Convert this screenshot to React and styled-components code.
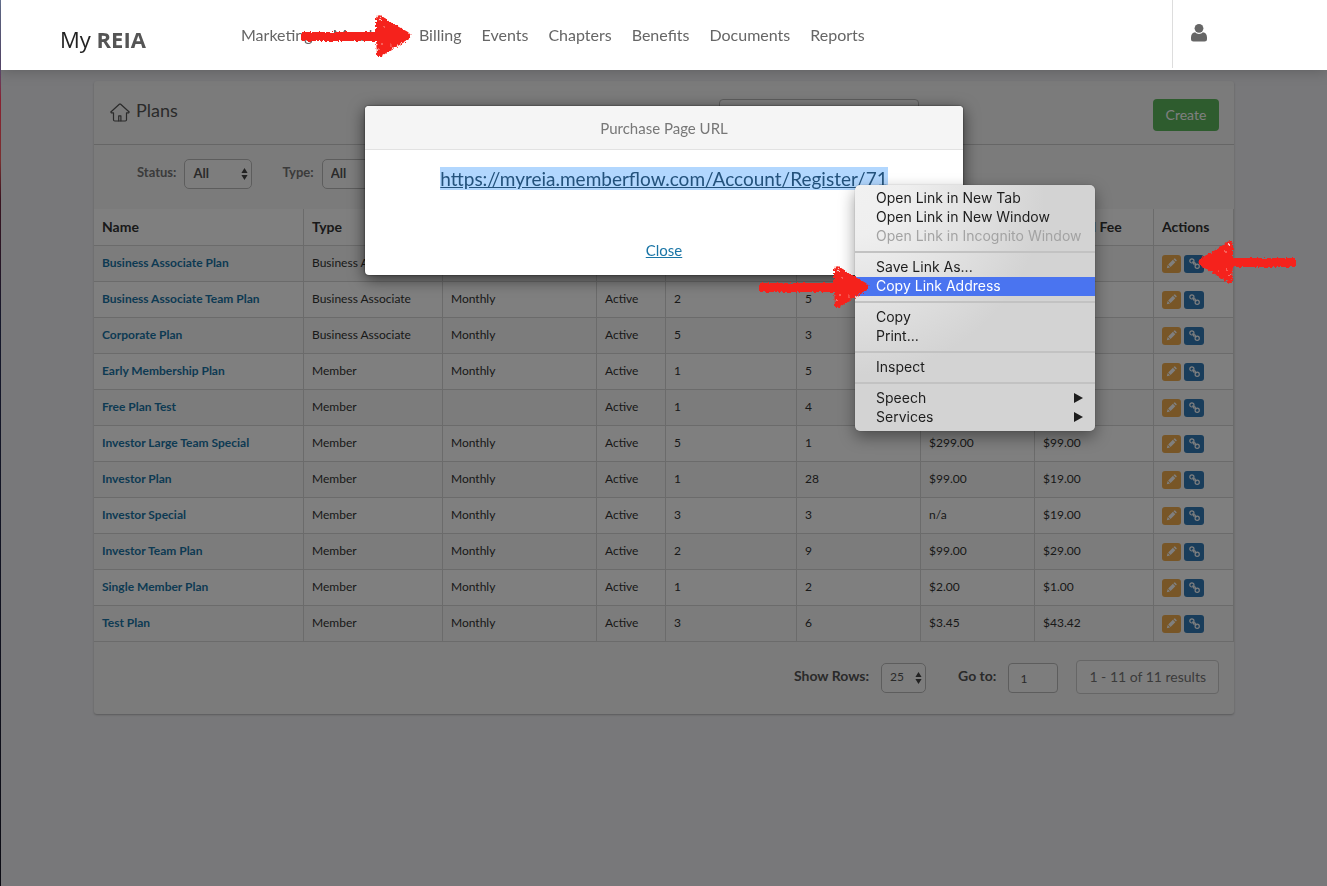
import React from "react";
import styled, { createGlobalStyle } from "styled-components";

const GlobalStyle = createGlobalStyle`
  * { box-sizing: border-box; }
  body {
    margin: 0;
    background: #f0f0f4;
    font-family: Lato, "Open Sans", sans-serif;
    color: #333;
  }
  #root { min-height: 100vh; display: flex; }
`;

const Page = styled.div`
  flex: 1;
  min-width: 0;
  min-height: 100vh;
  border-left: 1px solid;
  border-image: linear-gradient(#6a7898 0, #5a4a70 70px, #8a2030 100px, #7a3030 160px, #3a1420 200px, #15182c 320px, #0c0c14 100%) 1;
`;

const Header = styled.header`
  position: relative;
  z-index: 3;
  height: 70px;
  display: flex;
  align-items: center;
  padding-left: 59px;
  background: #fff;
  box-shadow: 0 0 14px rgba(0, 0, 0, 0.25);
`;

const Logo = styled.a`
  width: 181px;
  padding-top: 8px;
  font: 400 22px/32px "Open Sans", sans-serif;
  color: #222;
  text-decoration: none;
  white-space: nowrap;
  b { color: #555; }
`;

const Nav = styled.nav`
  position: relative;
  display: flex;
  gap: 20px;
  flex: 1;
`;

const NavLink = styled.a`
  font-size: 16px;
  line-height: 20px;
  color: #666;
  text-decoration: none;
`;

const UserArea = styled.div`
  align-self: flex-start;
  width: 155px;
  height: 68px;
  border-left: 1px solid #ddd;
  padding: 18px 0 0 13px;
`;

const IconButton = styled.button`
  display: grid;
  place-items: center;
  width: 26px;
  height: 30px;
  padding: 0;
  border: 0;
  background: none;
  color: #666;
`;

const Panel = styled.main`
  max-width: 1140px;
  margin: 11px auto 0;
  background: #f7f7f7;
  border-radius: 3px;
  box-shadow: 0 1px 2px rgba(0, 0, 0, 0.25);
`;

const PanelHead = styled.div`
  display: flex;
  height: 64px;
  padding: 18px 15px 0 16px;
  border-bottom: 1px solid #ccc;
`;

const Title = styled.h1`
  display: flex;
  gap: 6px;
  flex: 1;
  margin: 0;
  font-size: 18px;
  line-height: 22px;
  font-weight: 400;
  color: #555;
  svg { margin-top: 4px; }
`;

const Field = styled.input`
  width: ${(p) => p.$width}px;
  height: ${(p) => p.$height || 30}px;
  padding: 0 11px;
  border: 1px solid #bbb;
  border-radius: 4px;
  background: #fbfbfb;
  font: 400 12px/18px Lato, sans-serif;
  color: #555;
`;

const HeadActions = styled.div`
  display: flex;
  gap: 234px;
`;

const CreateButton = styled.button`
  width: 66px;
  height: 32px;
  padding: 0;
  border: 0;
  border-radius: 4px;
  background: #5cb85c;
  color: #fff;
  font: 400 14px/20px Lato, sans-serif;
`;

const Filters = styled.div`
  display: flex;
  gap: 30px;
  height: 64px;
  padding: 14px 0 0 43px;
`;

const Labelled = styled.div`
  display: flex;
  gap: ${(p) => p.$gap || 8}px;
`;

const Label = styled.label`
  padding-top: 3px;
  font-size: ${(p) => (p.$strong ? 14 : 13)}px;
  line-height: 20px;
  font-weight: 700;
  color: ${(p) => (p.$strong ? "#555" : "#777")};
`;

const SelectWrap = styled.span`
  position: relative;
  display: block;
  width: ${(p) => p.$width}px;
  height: 30px;
  svg { position: absolute; right: 4px; top: 9px; pointer-events: none; }
`;

const Select = styled.select`
  appearance: none;
  width: 100%;
  height: 30px;
  padding: 0 8px 2px;
  border: 1px solid #bbb;
  border-radius: 5px;
  background: #fbfbfb;
  font: 400 12px/18px Lato, sans-serif;
  ${(p) => p.$bold && "font-size: 13px; font-weight: 700;"}
  color: #555;
`;

const Table = styled.table`
  width: 100%;
  table-layout: fixed;
  border-collapse: separate;
  border-spacing: 0;
`;

const Th = styled.th`
  height: 37px;
  padding: 0 8px;
  border-right: 1px solid #d6d6d6;
  border-bottom: 1px solid #d6d6d6;
  background: #fff;
  text-align: left;
  white-space: nowrap;
  font-size: 14px;
  line-height: 20px;
  font-weight: 700;
  color: #333;
`;

const Row = styled.tr`
  background: ${(p) => (p.$striped ? "#f9f9f9" : "#fff")};
`;

const Td = styled.td`
  height: 36px;
  padding: 0 8px 2px;
  border-right: 1px solid #d6d6d6;
  border-bottom: 1px solid #d6d6d6;
  font-size: 12px;
  line-height: 18px;
  color: #333;
`;

const PlanLink = styled.a`
  font-weight: 700;
  color: #1a75a6;
  text-decoration: none;
`;

const Actions = styled.div`
  display: flex;
  gap: 3px;
  padding-top: 2px;
`;

const ActionButton = styled.button`
  display: grid;
  place-items: center;
  width: ${(p) => (p.$kind === "edit" ? 19 : 20)}px;
  height: 18px;
  padding: 0;
  border: 0;
  border-radius: 3px;
  color: #fff;
  background: ${(p) => (p.$kind === "edit" ? "#f0ad4e" : "#337ab7")};
`;

const PanelFoot = styled.div`
  display: flex;
  justify-content: flex-end;
  height: 72px;
  padding: 21px 15px 0 0;
`;

const PageControls = styled.div`
  display: flex;
  gap: 32px;
  margin-right: 18px;
`;

const Results = styled.output`
  height: 34px;
  margin-top: -3px;
  padding: 6px 12px;
  border: 1px solid #ccc;
  border-radius: 4px;
  background: #fbfbfb;
  font-size: 14px;
  line-height: 20px;
  color: #777;
`;

const Overlay = styled.div`
  position: fixed;
  inset: 70px 0 0 1px;
  z-index: 2;
  background: rgba(0, 0, 0, 0.5);
`;

const OverTop = styled.div`
  position: absolute;
  inset: 70px 0 auto 1px;
  z-index: 4;
`;

const Stage = styled.div`
  position: relative;
  max-width: 1140px;
  margin: 0 auto;
  padding-top: 36px;
`;

const Dialog = styled.section`
  position: relative;
  max-width: 598px;
  height: 169px;
  margin: 0 auto;
  border-radius: 4px;
  background: #fff;
  box-shadow: 0 4px 16px rgba(0, 0, 0, 0.6), 0 0 2px rgba(0, 0, 0, 0.7);
  text-align: center;
`;

const DialogTitle = styled.h2`
  height: 44px;
  margin: 0;
  padding-top: 12px;
  border-bottom: 1px solid #e2e2e2;
  border-radius: 4px 4px 0 0;
  background: #f5f5f5;
  font-size: 15px;
  line-height: 20px;
  font-weight: 400;
  color: #777;
`;

const DialogBody = styled.div`
  display: flex;
  flex-direction: column;
  align-items: center;
  gap: 50px;
  padding-top: 17px;
`;

const UrlLink = styled.a`
  background: #b2d7fe;
  font-size: 19px;
  line-height: 23px;
  color: #23527c;
`;

const CloseButton = styled.button`
  padding: 0;
  border: 0;
  background: none;
  font: 400 15px/20px Lato, sans-serif;
  color: #1a75a6;
  text-decoration: underline;
`;

const Menu = styled.div`
  position: absolute;
  left: 490px;
  top: 79px;
  width: 240px;
  padding: 4px 0;
  border-radius: 5px;
  background: radial-gradient(circle at 0 0, #f1f1f1 0, #efefef 50px, #d3d3d3 190px);
  box-shadow: 0 6px 16px rgba(0, 0, 0, 0.4), 0 0 1px rgba(0, 0, 0, 0.5);
`;

const MenuItem = styled.button`
  display: flex;
  align-items: center;
  justify-content: space-between;
  width: 100%;
  height: 19px;
  padding: 0 12px 2px 21px;
  border: 0;
  background: ${(p) => (p.$active ? "#4a74f0" : "none")};
  color: ${(p) => (p.$active ? "#fff" : p.disabled ? "#a3a3a3" : "#1d1d1d")};
  font: 400 14px/17px Inter, "Liberation Sans", sans-serif;
  text-align: left;
  white-space: nowrap;
`;

const MenuRule = styled.hr`
  height: 2px;
  margin: 5px 0;
  border: 0;
  background: #c2c2c2;
`;

const Mark = styled.svg`
  position: absolute;
  left: ${(p) => p.$x}px;
  top: ${(p) => p.$y}px;
  overflow: visible;
  pointer-events: none;
`;

function ChalkArrow({ id, x, y, left, length = 110 }) {
  const s = length - 110;
  return (
    <Mark $x={x} $y={y} width={length} height="44" viewBox={`0 0 ${length} 44`} aria-hidden="true">
      <defs>
        <filter id={id} x="-5%" y="-10%" width="110%" height="120%">
          <feTurbulence type="fractalNoise" baseFrequency="0.45" numOctaves="2" seed="4" result="n" />
          <feDisplacementMap in="SourceGraphic" in2="n" scale="4" xChannelSelector="R" yChannelSelector="G" />
        </filter>
      </defs>
      <g filter={`url(#${id})`} transform={left ? `translate(${length} 0) scale(-1 1)` : undefined}>
        <path
          fill="#f5231c"
          d={`M0 18 H${75 + s} L${75 + s} 4 Q${76 + s} 0 ${81 + s} 2 L${89 + s} 8 L${107 + s} 18 Q${112 + s} 22 ${107 + s} 26 L${90 + s} 36 L${79 + s} 43 Q${75 + s} 43 ${76 + s} 39 L${75 + s} 27 H0 Z`}
        />
        <g fill="#fff" opacity="0.75" transform={`translate(${s} 0)`}>
          <circle cx="79" cy="5" r="1.2" />
          <circle cx="83" cy="12" r="0.7" />
          <circle cx="78" cy="35" r="0.8" />
          <circle cx="81" cy="30" r="0.7" />
          <circle cx="90" cy="31" r="0.6" />
        </g>
      </g>
    </Mark>
  );
}

const UserIcon = () => (
  <svg width="18" height="20" viewBox="0 0 18 20" fill="currentColor" aria-hidden="true">
    <path d="M1 14.5c0-3 1.5-5 4.2-5.2C7 11.4 11 11.4 12.8 9.3 15.5 9.5 17 11.5 17 14.5v1.5q0 2.500-2.500 2.500h-11Q1 18.500 1 16z" />
    <circle cx="9" cy="5.300" r="4.400" />
  </svg>
);

const HomeIcon = () => (
  <svg width="20" height="19" viewBox="0 0 20 19" fill="none" stroke="currentColor" strokeWidth="1.200" strokeLinejoin="round" strokeLinecap="round" aria-hidden="true">
    <path d="M3.500 9.800H1.200L.8 9 9.300 1.200h1.400L19.200 9l-.4.800h-2.300v7q0 1.200-1.200 1.200H4.700q-1.200 0-1.200-1.200z" />
    <path d="M8.700 17.800v-5h2.200v5" />
  </svg>
);

const PencilIcon = () => (
  <svg width="11" height="11" viewBox="0 0 11 11" fill="currentColor" aria-hidden="true">
    <path d="M.8 10.300l.9-3.200 2.300 2.300zM2.200 6.500L6.900 1.800l2.400 2.400-4.700 4.700zM7.500 1.200l.6-.6q.5-.4 1 0l1.400 1.400q.4.500 0 1l-.6.600z" />
  </svg>
);

const LinkIcon = () => (
  <svg width="11" height="11" viewBox="0 0 11 11" fill="none" stroke="currentColor" strokeWidth="1.200" aria-hidden="true">
    <circle cx="2.900" cy="2.900" r="2.100" />
    <circle cx="8.200" cy="8.200" r="2.100" />
    <path d="M3.800 3.800l1.300 2.700M5.700 4.500l1.300 2.500" strokeLinecap="round" />
  </svg>
);

const SortIcon = () => (
  <svg width="7" height="12" viewBox="0 0 7 12" fill="#444" aria-hidden="true">
    <path d="M3.500 0L6.600 5H.4zM3.500 12L.4 7h6.200z" />
  </svg>
);

function Dropdown({ id, width, value, bold }) {
  return (
    <SelectWrap $width={width}>
      <Select id={id} $bold={bold} defaultValue={value}>
        <option>{value}</option>
      </Select>
      <SortIcon />
    </SelectWrap>
  );
}

const navItems = ["Marketing", "Members", "Billing", "Events", "Chapters", "Benefits", "Documents", "Reports"];

const columns = [
  ["Name", 210], ["Type", 139], ["", 154], ["", 69], ["", 131],
  ["", 124], ["", 114], ["Renewal Fee", 119], ["Actions", 80],
];

const plans = [
  ["Business Associate Plan", "Business Associate", "", "", "", "", "", ""],
  ["Business Associate Team Plan", "Business Associate", "Monthly", "Active", "2", "5", "", ""],
  ["Corporate Plan", "Business Associate", "Monthly", "Active", "5", "3", "", ""],
  ["Early Membership Plan", "Member", "Monthly", "Active", "1", "5", "", ""],
  ["Free Plan Test", "Member", "", "Active", "1", "4", "", ""],
  ["Investor Large Team Special", "Member", "Monthly", "Active", "5", "1", "$299.00", "$99.00"],
  ["Investor Plan", "Member", "Monthly", "Active", "1", "28", "$99.00", "$19.00"],
  ["Investor Special", "Member", "Monthly", "Active", "3", "3", "n/a", "$19.00"],
  ["Investor Team Plan", "Member", "Monthly", "Active", "2", "9", "$99.00", "$29.00"],
  ["Single Member Plan", "Member", "Monthly", "Active", "1", "2", "$2.00", "$1.00"],
  ["Test Plan", "Member", "Monthly", "Active", "3", "6", "$3.45", "$43.42"],
];

const menuGroups = [
  ["Open Link in New Tab", "Open Link in New Window", "Open Link in Incognito Window"],
  ["Save Link As...", "Copy Link Address"],
  ["Copy", "Print..."],
  ["Inspect"],
  ["Speech", "Services"],
];

function ContextMenu() {
  return (
    <Menu role="menu">
      {menuGroups.map((group, i) => (
        <React.Fragment key={group[0]}>
          {i > 0 && <MenuRule />}
          {group.map((item) => (
            <MenuItem
              key={item}
              role="menuitem"
              $active={item === "Copy Link Address"}
              disabled={item === "Open Link in Incognito Window"}
            >
              {item}
              {i === 4 && (
                <svg width="10" height="10" viewBox="0 0 10 10" aria-hidden="true">
                  <path d="M1 0L10 5 1 10z" fill="#1d1d1d" />
                </svg>
              )}
            </MenuItem>
          ))}
        </React.Fragment>
      ))}
    </Menu>
  );
}

export default function App() {
  return (
    <Page>
      <GlobalStyle />
      <Header>
        <Logo href="#">My <b>REIA</b></Logo>
        <Nav>
          {navItems.map((item) => <NavLink key={item} href="#">{item}</NavLink>)}
          <ChalkArrow id="chalk-nav" x={60} y={-11} />
        </Nav>
        <UserArea>
          <IconButton aria-label="Account"><UserIcon /></IconButton>
        </UserArea>
      </Header>

      <Panel>
        <PanelHead>
          <Title><HomeIcon />Plans</Title>
          <HeadActions>
            <Field type="search" aria-label="Search plans" $width={200} $height={32} />
            <CreateButton>Create</CreateButton>
          </HeadActions>
        </PanelHead>
        <Filters>
          <Labelled>
            <Label htmlFor="status">Status:</Label>
            <Dropdown id="status" width={68} value="All" bold />
          </Labelled>
          <Labelled>
            <Label htmlFor="type">Type:</Label>
            <Dropdown id="type" width={120} value="All" bold />
          </Labelled>
        </Filters>
        <Table>
          <colgroup>
            {columns.map(([, width], i) => <col key={i} width={width} />)}
          </colgroup>
          <thead>
            <tr>{columns.map(([name], i) => <Th key={i} scope="col">{name}</Th>)}</tr>
          </thead>
          <tbody>
            {plans.map(([name, ...cells], i) => (
              <Row key={name} $striped={i % 2 === 0}>
                <Td><PlanLink href="#">{name}</PlanLink></Td>
                {cells.map((cell, c) => <Td key={c}>{cell}</Td>)}
                <Td>
                  <Actions>
                    <ActionButton $kind="edit" aria-label={`Edit ${name}`}><PencilIcon /></ActionButton>
                    <ActionButton $kind="link" aria-label={`Purchase link for ${name}`}><LinkIcon /></ActionButton>
                  </Actions>
                </Td>
              </Row>
            ))}
          </tbody>
        </Table>
        <PanelFoot>
          <PageControls>
            <Labelled $gap={12}>
              <Label $strong htmlFor="rows">Show Rows:</Label>
              <Dropdown id="rows" width={45} value="25" />
            </Labelled>
            <Labelled $gap={12}>
              <Label $strong htmlFor="goto">Go to:</Label>
              <Field id="goto" type="text" defaultValue="1" $width={50} />
            </Labelled>
          </PageControls>
          <Results>1 - 11 of 11 results</Results>
        </PanelFoot>
      </Panel>

      <Overlay />
      <OverTop>
        <Stage>
          <Dialog role="dialog" aria-labelledby="dialog-title">
            <DialogTitle id="dialog-title">Purchase Page URL</DialogTitle>
            <DialogBody>
              <UrlLink href="#">https://myreia.memberflow.com/Account/Register/71</UrlLink>
              <CloseButton>Close</CloseButton>
            </DialogBody>
            <ContextMenu />
            <ChalkArrow id="chalk-menu" x={394} y={159} />
          </Dialog>
          <ChalkArrow id="chalk-action" x={1104} y={170} left length={98} />
        </Stage>
      </OverTop>
    </Page>
  );
}
